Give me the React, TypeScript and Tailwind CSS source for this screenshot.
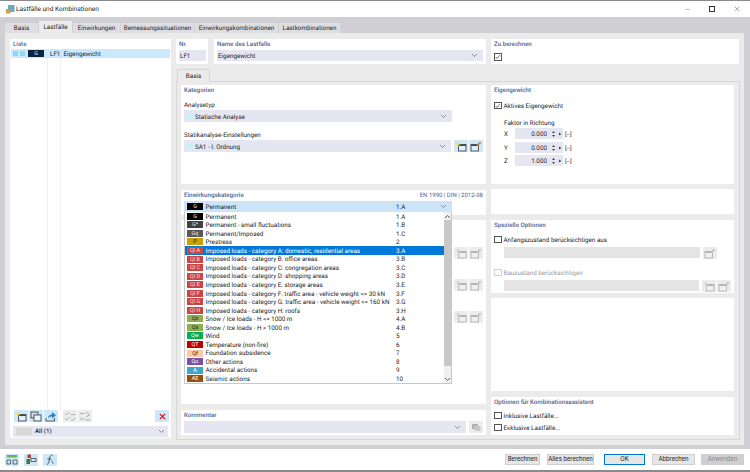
import { ReactNode } from "react";
import { X } from "lucide-react";

const categories = [
  { tag: "G", name: "Permanent", code: "1.A", cls: "bg-[#000000] text-[#e8e8e8]" },
  { tag: "G*", name: "Permanent - small fluctuations", code: "1.B", cls: "bg-[#404040] text-[#e8e8e8]" },
  { tag: "Gq", name: "Permanent/Imposed", code: "1.C", cls: "bg-[#595959] text-[#e8e8e8]" },
  { tag: "P", name: "Prestress", code: "2", cls: "bg-[#c9a100] text-[#222]" },
  { tag: "QI A", name: "Imposed loads - category A: domestic, residential areas", code: "3.A", cls: "bg-[#cc4444] text-[#f4dcdc]" },
  { tag: "QI B", name: "Imposed loads - category B: office areas", code: "3.B", cls: "bg-[#cc4444] text-[#f4dcdc]" },
  { tag: "QI C", name: "Imposed loads - category C: congregation areas", code: "3.C", cls: "bg-[#cc4444] text-[#f4dcdc]" },
  { tag: "QI D", name: "Imposed loads - category D: shopping areas", code: "3.D", cls: "bg-[#cc4444] text-[#f4dcdc]" },
  { tag: "QI E", name: "Imposed loads - category E: storage areas", code: "3.E", cls: "bg-[#cc4444] text-[#f4dcdc]" },
  { tag: "QI F", name: "Imposed loads - category F: traffic area - vehicle weight <= 30 kN", code: "3.F", cls: "bg-[#cc4444] text-[#f4dcdc]" },
  { tag: "QI G", name: "Imposed loads - category G: traffic area - vehicle weight <= 160 kN", code: "3.G", cls: "bg-[#cc4444] text-[#f4dcdc]" },
  { tag: "QI H", name: "Imposed loads - category H: roofs", code: "3.H", cls: "bg-[#cc4444] text-[#f4dcdc]" },
  { tag: "Qs", name: "Snow / Ice loads - H <= 1000 m", code: "4.A", cls: "bg-[#8db04c] text-[#222]" },
  { tag: "Qs", name: "Snow / Ice loads - H > 1000 m", code: "4.B", cls: "bg-[#8db04c] text-[#222]" },
  { tag: "Qw", name: "Wind", code: "5", cls: "bg-[#00b050] text-white" },
  { tag: "QT", name: "Temperature (non-fire)", code: "6", cls: "bg-[#c00000] text-white" },
  { tag: "Qf", name: "Foundation subsidence", code: "7", cls: "bg-[#f8cba6] text-[#222]" },
  { tag: "Qo", name: "Other actions", code: "8", cls: "bg-[#7a4fa8] text-white" },
  { tag: "A", name: "Accidental actions", code: "9", cls: "bg-[#3ea6cc] text-white" },
  { tag: "AE", name: "Seismic actions", code: "10", cls: "bg-[#96500f] text-white" },
];

const Chevron = ({ className = "stroke-[#777]" }: { className?: string }) => (
  <svg width="7" height="5" viewBox="0 0 7 5" fill="none" className={className}>
    <path d="M1 1l2.5 2.5L6 1" strokeWidth="0.8" />
  </svg>
);

const Title = ({ children }: { children: ReactNode }) => (
  <div className="h-[9px] pt-[1px] text-[6.2px] leading-[9px] text-[#4f5f95] font-medium">{children}</div>
);

const Label = ({ children, className = "" }: { children: ReactNode; className?: string }) => (
  <div className={`h-[9px] pt-[1px] text-[6.3px] leading-[9px] ${className}`}>{children}</div>
);

const Panel = ({ className = "", children }: { className?: string; children?: ReactNode }) => (
  <div className={`bg-white ${className}`}>{children}</div>
);

const Dropdown = ({ text, swatch, className = "h-[12px]" }: { text?: string; swatch?: boolean; className?: string }) => (
  <div className={`bg-[#e6e6f2] flex items-center pr-[5px] ${className}`}>
    {swatch && <span className="w-[6px] h-[6px] ml-[3px] mr-[2px] bg-[#c8f0f8]" />}
    <span className={`flex-1 pt-[2px] text-[6.3px] leading-[9px] ${swatch ? "" : "pl-[1px]"}`}>{text}</span>
    <Chevron />
  </div>
);

const Checkbox = ({ on, disabled }: { on?: boolean; disabled?: boolean }) => (
  <span className={`w-[7.5px] h-[7.5px] border bg-white flex items-center justify-center ${disabled ? "border-[#cfcfcf]" : "border-[#555]"}`}>
    {on && (
      <svg width="6" height="6" viewBox="0 0 6 6" fill="none" stroke="#444" strokeWidth="0.8">
        <path d="M0.8 3l1.5 1.6L5.2 1" />
      </svg>
    )}
  </span>
);

const CheckRow = ({ label, on, disabled, className = "" }: { label: string; on?: boolean; disabled?: boolean; className?: string }) => (
  <div className={`h-[9px] flex items-center gap-[2px] ${disabled ? "text-[#9a9a9a]" : ""} ${className}`}>
    <Checkbox on={on} disabled={disabled} />
    <span className="pt-[2px] text-[6.3px] leading-[9px]">{label}</span>
  </div>
);

// the little "new / edit object" window glyphs
const NewGlyph = ({ muted }: { muted?: boolean }) => (
  <svg width="12" height="11" viewBox="0 0 12 11" fill="none">
    <rect x="3.5" y="3.5" width="7.5" height="6.5" stroke={muted ? "#b4b4b4" : "#3f4a55"} strokeWidth="0.9" fill={muted ? "#efefef" : "#dff0fa"} />
    <rect x="3.5" y="3.5" width="7.5" height="1.5" fill={muted ? "#b4b4b4" : "#3f4a55"} />
    <path d="M3 0l.8 2.2L6 3l-2.2.8L3 6l-.8-2.2L0 3l2.2-.8z" fill={muted ? "#d4d4d4" : "#f7df2e"} />
  </svg>
);

const EditGlyph = ({ muted }: { muted?: boolean }) => (
  <svg width="12" height="11" viewBox="0 0 12 11" fill="none">
    <rect x="1" y="3.5" width="7.5" height="6.5" stroke={muted ? "#b4b4b4" : "#3f4a55"} strokeWidth="0.9" fill={muted ? "#efefef" : "#dff0fa"} />
    <rect x="1" y="3.5" width="7.5" height="1.5" fill={muted ? "#b4b4b4" : "#3f4a55"} />
    <path d="M6.8 3.6l3.2-3 1.4 1.3-3.2 3z" fill={muted ? "#c4c4c4" : "#c9963f"} />
  </svg>
);

const CopyGlyph = () => (
  <svg width="12" height="11" viewBox="0 0 12 11" fill="none" stroke="#3f4a55" strokeWidth="0.9">
    <rect x="1" y="1" width="7" height="6" fill="#cfdce6" />
    <rect x="4" y="4" width="7" height="6" fill="#eef5fa" />
  </svg>
);

const ExportGlyph = () => (
  <svg width="12" height="11" viewBox="0 0 12 11" fill="none">
    <path d="M1 7v3h8.5V7" stroke="#3f4a55" strokeWidth="0.9" />
    <path d="M3 7.5C3 4.5 4.8 3.4 7 3.4V1l4 3.3L7 7.5V5.5C5.4 5.5 4.2 6 3 7.5z" fill="#2f7fc4" />
  </svg>
);

const CheckAllGlyph = ({ flip }: { flip?: boolean }) => (
  <svg width="12" height="11" viewBox="0 0 12 11" fill="none" stroke="#a4a4a4" strokeWidth="0.9">
    <path d={flip ? "M1 2.5h4.5M1 8h4.5" : "M1 2.5l1.5 1.5L5.5 1M1 7.5L2.5 9l3-3"} />
    <path d={flip ? "M7 1l3.5 2.8L7 6.2M6.5 9H11" : "M7 3.5h4M7 8.5l1.5 1.2L11 7"} />
  </svg>
);

const IconBtn = ({ children, tone = "blue", className = "" }: { children?: ReactNode; tone?: "blue" | "grey"; className?: string }) => (
  <span className={`w-[14px] h-[12px] flex items-center justify-center ${tone === "blue" ? "bg-[#cfe8f8]" : "bg-[#ececec]"} ${className}`}>
    {children}
  </span>
);

const PairMuted = () => (
  <div className="flex gap-[1px]">
    <IconBtn tone="grey"><NewGlyph muted /></IconBtn>
    <IconBtn tone="grey"><EditGlyph muted /></IconBtn>
  </div>
);

const FactorRow = ({ axis, value, className = "" }: { axis: string; value: string; className?: string }) => (
  <div className={`flex items-center h-[11px] ${className}`}>
    <span className="w-[11px] pt-[2px] text-[6.3px] leading-[9px]">{axis}</span>
    <div className="w-[48px] h-[11px] bg-[#e6e6f2] flex items-center">
      <span className="w-[32px] pt-[2px] text-right text-[6.3px] leading-[9px]">{value}</span>
      <svg width="16" height="8" viewBox="0 0 16 8" className="fill-[#444]">
        <path d="M5 3l1.6-2L8 3zM5 5h3L6.6 7zM12 2.4L14.4 4 12 5.6z" />
      </svg>
    </div>
    <span className="ml-[2px] pt-[2px] text-[6px] leading-[9px]">[--]</span>
  </div>
);

const Tab = ({ label, width, active }: { label: string; width: string; active?: boolean }) => (
  <div className={`${width} flex items-center justify-center pt-[1px] text-[6.3px] ${active ? "h-[12px] bg-[#ebebeb]" : "h-[10.5px] bg-[#dedee2]"}`}>
    {label}
  </div>
);

const Action = ({ label, className = "" }: { label: string; className?: string }) => (
  <button className={`h-[11.5px] flex items-center justify-center whitespace-nowrap text-[6.3px] border ${className}`}>{label}</button>
);

export default function App() {
  return (
    <div
      className="w-[750px] h-[472px] bg-[#d0d0d4] flex flex-col overflow-hidden border-t border-b-2 border-[#8a8a8a] text-[#1e1e1e] [text-rendering:geometricPrecision]"
      style={{ fontFamily: 'Roboto, "Noto Sans", sans-serif' }}
    >
      {/* title bar */}
      <div className="h-[16px] bg-white flex items-center shrink-0">
        <svg width="10" height="10" viewBox="0 0 10 10" className="ml-[5px] mr-[1px]">
          <rect x="3" y="1" width="6.5" height="7" fill="#6aa6c8" />
          <rect x="1" y="5" width="4.5" height="4.5" fill="#c9a445" />
        </svg>
        <span className="pt-[1px] text-[6.5px]">Lastfälle und Kombinationen</span>
        <div className="ml-auto flex items-center">
          <span className="w-[5px] h-px bg-[#c4c4c4] mr-[19px]" />
          <span className="w-[6px] h-[6px] border border-[#333] mr-[18px]" />
          <X size={8} strokeWidth={1.2} className="mr-[9px] text-[#333]" />
        </div>
      </div>

      {/* tabs */}
      <div className="h-[16px] shrink-0 flex items-end pl-[5px] gap-[1px] overflow-visible">
        <Tab label="Basis" width="w-[33px]" />
        <Tab label="Lastfälle" width="w-[33px]" active />
        <Tab label="Einwirkungen" width="w-[47px]" />
        <Tab label="Bemessungssituationen" width="w-[73px]" />
        <Tab label="Einwirkungskombinationen" width="w-[83px]" />
        <Tab label="Lastkombinationen" width="w-[61px]" />
      </div>

      {/* main */}
      <div className="ml-[5px] w-[739px] h-[412px] shrink-0 bg-[#ebebeb] flex gap-[5px] pl-[5px] pt-[6px]">
        {/* list */}
        <Panel className="w-[161px] h-[399px] flex flex-col pl-[1px] pr-[1px]">
          <div className="pl-[2px] h-[10px]"><Title>Liste</Title></div>
          <div className="h-[9px] bg-[#cce8ff] flex items-center pl-[2px]">
            <span className="w-[5px] h-[5.5px] bg-[#8fd8f5]" />
            <span className="w-[5px] h-[5.5px] bg-[#8fd8f5] ml-[2px]" />
            <span className="w-[16px] h-[7px] ml-[3px] overflow-hidden bg-[#0b2540] text-[#e8e8e8] text-[5.5px] leading-[9px] text-center">G</span>
            <span className="ml-[6px] pt-[2px] text-[6.3px] leading-[9px]">LF1</span>
            <span className="ml-[3px] pt-[2px] text-[6.3px] leading-[9px]">Eigengewicht</span>
          </div>
          <div className="flex-1 flex">
            <span className="ml-[36px] w-px bg-[#efefef]" />
            <span className="ml-[12px] w-px bg-[#efefef]" />
          </div>
          <div className="h-[12px] flex items-center pl-[2.5px] pr-[1px] mb-[4px]">
            <IconBtn className="mr-[1px]"><NewGlyph /></IconBtn>
            <IconBtn className="mr-[1px]"><CopyGlyph /></IconBtn>
            <IconBtn className="mr-[5px]"><ExportGlyph /></IconBtn>
            <IconBtn tone="grey" className="mr-[1px]"><CheckAllGlyph /></IconBtn>
            <IconBtn tone="grey"><CheckAllGlyph flip /></IconBtn>
            <IconBtn className="ml-auto">
              <X size={9} strokeWidth={3} className="text-[#e0141e]" />
            </IconBtn>
          </div>
          <div className="h-[11px] mx-[2px] mb-[1px] bg-[#e6e6f2] flex items-center pl-[3px] pr-[3px]">
            <span className="w-[16px] h-[7px] bg-[#d8d8d8] mr-[3px]" />
            <span className="flex-1 pt-[1px] text-[6.2px] font-medium">All (1)</span>
            <Chevron />
          </div>
        </Panel>

        <div className="w-[564px] flex flex-col">
          {/* head row */}
          <div className="flex h-[25px] gap-[5px]">
            <Panel className="w-[32px] mr-[1px] px-[3px]">
              <Title>Nr.</Title>
              <div className="mt-[2px] h-[11px] w-[27px] bg-[#e6e6f2] flex items-center pl-[1px] pt-[1px] text-[6.3px] leading-[9px]">LF1</div>
            </Panel>
            <Panel className="w-[272px] px-[3px]">
              <Title>Name des Lastfalls</Title>
              <Dropdown text="Eigengewicht" className="mt-[2px] h-[11px]" />
            </Panel>
            <Panel className="w-[248px] px-[3px]">
              <Title>Zu berechnen</Title>
              <div className="mt-[5px]"><Checkbox on /></div>
            </Panel>
          </div>

          {/* inner tab */}
          <div className="mt-[5px] ml-[1px] w-[33px] h-[13px] -mb-px pt-[1px] bg-[#ebebeb] border border-b-0 border-[#d6d6d6] flex items-center justify-center text-[6.3px] relative">
            Basis
          </div>
          <div className="h-[359px] border border-[#d6d6d6] pt-[3px] pl-[4px] flex gap-[5px]">
            {/* left stack */}
            <div className="w-[305px] flex flex-col">
              <Panel className="h-[99px] px-[3px]">
                <Title>Kategorien</Title>
                <Label className="mt-[6px]">Analysetyp</Label>
                <Dropdown text="Statische Analyse" swatch className="mt-[1px] h-[12px] w-[268px]" />
                <Label className="mt-[8px]">Statikanalyse-Einstellungen</Label>
                <div className="flex mt-[1px] gap-[3px]">
                  <Dropdown text="SA1 - I. Ordnung" swatch className="h-[12px] w-[268px]" />
                  <div className="flex gap-[1px]">
                    <IconBtn><NewGlyph /></IconBtn>
                    <IconBtn><EditGlyph /></IconBtn>
                  </div>
                </div>
              </Panel>

              <Panel className="relative mt-[6px] h-[25px] px-[3px]">
                <div className="flex justify-between">
                  <Title>Einwirkungskategorie</Title>
                  <span className="h-[9px] pt-[1px] text-[6px] leading-[9px] text-[#4f5f95]">EN 1990 | DIN | 2012-08</span>
                </div>
                <div className="mt-[2px] w-[268px] h-[11px] bg-[#cce4f7] flex items-center pl-[3px] pr-[5px]">
                  <span className="w-[16px] h-[7px] overflow-hidden bg-black text-[#e8e8e8] text-[5.5px] leading-[9px] text-center">G</span>
                  <span className="ml-[2.5px] w-[190.5px] pt-[2px] text-[6.3px] leading-[9px]">Permanent</span>
                  <span className="pt-[2px] text-[6.3px] leading-[9px] flex-1">1.A</span>
                  <Chevron />
                </div>

                {/* open list */}
                <div className="absolute z-10 left-[3px] top-[22px] w-[268px] h-[172px] bg-white border border-t-0 border-[#c8c8c8] flex">
                  <div className="w-[259px] flex flex-col">
                    {categories.map((c, i) => (
                      <div key={i} className={`h-[8.55px] flex items-center pl-[2px] ${i === 4 ? "bg-[#0078d7] text-white" : ""}`}>
                        <span className={`w-[16px] h-[7px] overflow-hidden text-[5.5px] leading-[9px] text-center whitespace-nowrap shrink-0 ${c.cls}`}>{c.tag}</span>
                        <span className="ml-[2.5px] w-[190.5px] pt-[1px] text-[6.3px] leading-none whitespace-nowrap shrink-0">{c.name}</span>
                        <span className="pt-[1px] text-[6.3px] leading-none">{c.code}</span>
                      </div>
                    ))}
                  </div>
                  <div className="flex-1 bg-[#f0f0f0] flex flex-col items-center">
                    <div className="h-[8px] flex items-center"><Chevron className="stroke-[#333] rotate-180" /></div>
                    <div className="w-full h-[146px] bg-[#c8c8c8]" />
                    <div className="mt-auto h-[8px] flex items-center"><Chevron className="stroke-[#333]" /></div>
                  </div>
                </div>
              </Panel>

              <Panel className="mt-[5px] h-[184px] flex flex-col items-end pr-[3px] pt-[27px] gap-[20px]">
                <PairMuted />
                <PairMuted />
                <PairMuted />
              </Panel>

              <Panel className="mt-[6px] h-[25px] px-[3px]">
                <Title>Kommentar</Title>
                <div className="flex mt-[2px] gap-[3px]">
                  <Dropdown className="h-[12px] w-[283px]" />
                  <IconBtn tone="grey" className="w-[13px]">
                    <svg width="9" height="7" viewBox="0 0 9 7" className="fill-[#b0b0b0]">
                      <rect x="0" y="0" width="6" height="5" />
                      <rect x="2.5" y="2" width="6" height="5" fill="#c8c8c8" />
                    </svg>
                  </IconBtn>
                </div>
              </Panel>
            </div>

            {/* right stack */}
            <div className="w-[243px] flex flex-col">
              <Panel className="h-[99px] px-[3px]">
                <Title>Eigengewicht</Title>
                <CheckRow label="Aktives Eigengewicht" on className="mt-[7px]" />
                <Label className="ml-[10px] mt-[8px]">Faktor in Richtung</Label>
                <div className="ml-[10px] mt-[1px]">
                  <FactorRow axis="X" value="0.000" className="mb-[3px]" />
                  <FactorRow axis="Y" value="0.000" className="mb-[2px]" />
                  <FactorRow axis="Z" value="1.000" />
                </div>
              </Panel>

              <Panel className="mt-[5px] h-[25px]" />

              <Panel className="mt-[6px] h-[73px] px-[3px]">
                <Title>Spezielle Optionen</Title>
                <CheckRow label="Anfangszustand berücksichtigen aus" className="mt-[6px]" />
                <div className="mt-[3px] ml-[10px] flex gap-[3px]">
                  <div className="w-[196px] h-[11px] bg-[#e4e4e4]" />
                  <IconBtn tone="grey" className="h-[11px]"><EditGlyph muted /></IconBtn>
                </div>
                <CheckRow label="Bauzustand berücksichtigen" disabled className="mt-[9px]" />
                <div className="mt-[3px] ml-[10px] flex gap-[3px]">
                  <div className="w-[196px] h-[11px] bg-[#e4e4e4]" />
                  <div className="flex gap-[1px]">
                    <IconBtn tone="grey" className="h-[11px]"><NewGlyph muted /></IconBtn>
                    <IconBtn tone="grey" className="h-[11px]"><EditGlyph muted /></IconBtn>
                  </div>
                </div>
              </Panel>

              <Panel className="mt-[5px] h-[93px]" />

              <Panel className="mt-[6px] h-[38px] px-[3px]">
                <Title>Optionen für Kombinationsassistent</Title>
                <CheckRow label="Inklusive Lastfälle..." className="mt-[5px]" />
                <CheckRow label="Exklusive Lastfälle..." className="mt-[3px]" />
              </Panel>
            </div>
          </div>
        </div>
      </div>

      {/* footer */}
      <div className="mt-[4px] flex-1 bg-white flex items-center pl-[5px]">
        <IconBtn className="mr-[5px]">
          <svg width="12" height="11" viewBox="0 0 12 11" fill="none">
            <rect x="1" y="1" width="10" height="2.5" fill="#6fae58" />
            <path d="M1 6h3.5v4H1zM7 6h4v4H7z" stroke="#3f4a55" strokeWidth="0.8" />
          </svg>
        </IconBtn>
        <IconBtn className="mr-[5px]">
          <svg width="12" height="11" viewBox="0 0 12 11" fill="none">
            <rect x="2.5" y="0.5" width="3.5" height="3.5" fill="#c0392b" />
            <rect x="1.5" y="5" width="3.5" height="5" fill="#3b7a3b" />
            <rect x="6" y="4.5" width="5" height="3" stroke="#3f4a55" strokeWidth="0.8" />
          </svg>
        </IconBtn>
        <IconBtn>
          <svg width="12" height="11" viewBox="0 0 12 11" fill="none" stroke="#3f4a55" strokeWidth="0.9">
            <path d="M3 10.5C5 10 5 7 5.5 4 6 2 7 1 8.5 1.2" />
            <path d="M3.5 5h4" />
            <path d="M7.5 6.5l2 3.5" stroke="#2f7fc4" />
          </svg>
        </IconBtn>
        <div className="ml-auto flex mr-[6px]">
          <Action label="Berechnen" className="w-[35px] bg-[#e6e6e6] border-[#cfcfcf] mr-[7px]" />
          <Action label="Alles berechnen" className="w-[47px] bg-[#e6e6e6] border-[#cfcfcf] mr-[10px]" />
          <Action label="OK" className="w-[41px] bg-[#e6e6e6] border-[#0078d7] mr-[7px]" />
          <Action label="Abbrechen" className="w-[43px] bg-[#e6e6e6] border-[#cfcfcf] mr-[6px]" />
          <Action label="Anwenden" className="w-[43px] bg-[#cfcfcf] border-[#cfcfcf] text-[#8a8a8a]" />
        </div>
      </div>
    </div>
  );
}
